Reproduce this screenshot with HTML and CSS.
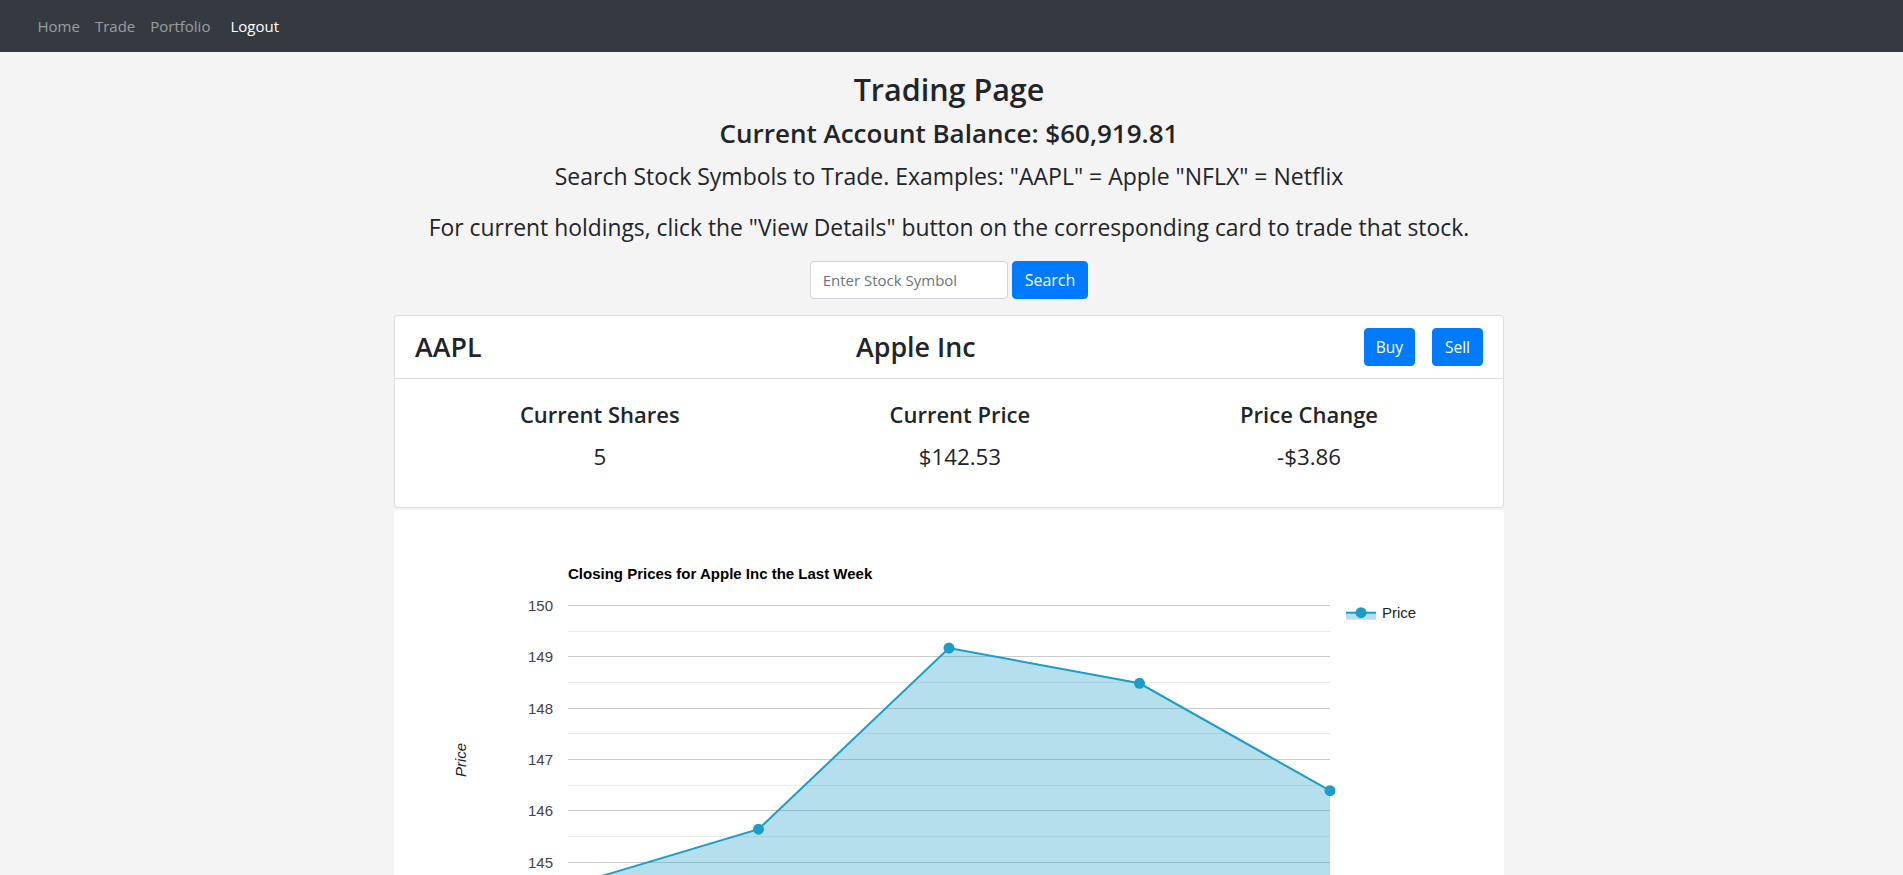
FILE: index.html
```html
<!DOCTYPE html>
<html lang="en">
<head>
<meta charset="utf-8">
<title>Trading Page</title>
<link rel="stylesheet" href="styles.css">
</head>
<body>
<nav class="navbar">
  <a class="nav-link" href="#">Home</a>
  <a class="nav-link" href="#">Trade</a>
  <a class="nav-link" href="#">Portfolio</a>
  <a class="nav-link logout" href="#">Logout</a>
</nav>
<div class="page">
<main class="container">
  <h2 class="title">Trading Page</h2>
  <h3 class="balance">Current Account Balance: $60,919.81</h3>
  <p class="lead">Search Stock Symbols to Trade. Examples: "AAPL" = Apple "NFLX" = Netflix</p>
  <p class="lead">For current holdings, click the "View Details" button on the corresponding card to trade that stock.</p>
  <form class="search" onsubmit="return false">
    <input class="form-control" type="text" placeholder="Enter Stock Symbol">
    <button class="btn" type="submit">Search</button>
  </form>
  <section class="card">
    <div class="card-header">
      <h3 class="symbol">AAPL</h3>
      <h3 class="company">Apple Inc</h3>
      <div class="actions">
        <button class="btn" type="button">Buy</button>
        <button class="btn" type="button">Sell</button>
      </div>
    </div>
    <div class="card-body">
      <div class="stat"><h4>Current Shares</h4><p>5</p></div>
      <div class="stat"><h4>Current Price</h4><p>$142.53</p></div>
      <div class="stat"><h4>Price Change</h4><p>-$3.86</p></div>
    </div>
  </section>
  <div class="chart">
    <svg class="chart-svg" width="1110" height="480" viewBox="0 0 1110 480" xmlns="http://www.w3.org/2000/svg">
      <text class="c-title" x="174" y="69">Closing Prices for Apple Inc the Last Week</text>
      <g class="minor">
        <line x1="174" x2="936" y1="121.5" y2="121.5"/>
        <line x1="174" x2="936" y1="172.5" y2="172.5"/>
        <line x1="174" x2="936" y1="223.5" y2="223.5"/>
        <line x1="174" x2="936" y1="275.5" y2="275.5"/>
        <line x1="174" x2="936" y1="326.5" y2="326.5"/>
        <line x1="174" x2="936" y1="377.5" y2="377.5"/>
      </g>
      <g class="major">
        <line x1="174" x2="936" y1="95.5" y2="95.5"/>
        <line x1="174" x2="936" y1="146.5" y2="146.5"/>
        <line x1="174" x2="936" y1="198.5" y2="198.5"/>
        <line x1="174" x2="936" y1="249.5" y2="249.5"/>
        <line x1="174" x2="936" y1="300.5" y2="300.5"/>
        <line x1="174" x2="936" y1="352.5" y2="352.5"/>
        <line x1="174" x2="936" y1="403.5" y2="403.5"/>
      </g>
      <g class="ylabels">
        <text x="159" y="101">150</text>
        <text x="159" y="152">149</text>
        <text x="159" y="204">148</text>
        <text x="159" y="255">147</text>
        <text x="159" y="306">146</text>
        <text x="159" y="358">145</text>
        <text x="159" y="409">144</text>
      </g>
      <text class="axis-title" transform="translate(72,250) rotate(-90)">Price</text>
      <polygon class="area" points="174,403.5 174,376.1 364.5,319.2 555,138.1 745.5,173.3 936,280.7 936,403.5"/>
      <polyline class="series" points="174,376.1 364.5,319.2 555,138.1 745.5,173.3 936,280.7"/>
      <g class="dots">
        <circle cx="174" cy="376.1" r="5.5"/>
        <circle cx="364.5" cy="319.2" r="5.5"/>
        <circle cx="555" cy="138.1" r="5.5"/>
        <circle cx="745.5" cy="173.3" r="5.5"/>
        <circle cx="936" cy="280.7" r="5.5"/>
      </g>
      <g class="legend">
        <rect class="area" x="952" y="102.7" width="30" height="7"/>
        <line class="series" x1="952" x2="982" y1="102.7" y2="102.7"/>
        <circle class="dot" cx="967" cy="102.7" r="5.5"/>
        <text class="legend-text" x="988" y="108">Price</text>
      </g>
    </svg>
  </div>
</main>
</div>
</body>
</html>
```

FILE: styles.css
```css
* { box-sizing: border-box; }
html, body { margin: 0; padding: 0; }
body {
  font-family: "Open Sans", "Noto Sans", sans-serif;
  background: #f4f4f4;
  color: #212529;
}
.navbar {
  background: #343a40;
  height: 52px;
  display: flex;
  align-items: center;
  padding: 0 30px;
}
.nav-link {
  color: rgba(255,255,255,.5);
  text-decoration: none;
  font-size: 15px;
  line-height: 24px;
  padding: 0 7.5px;
}
.nav-link.logout { color: #fff; margin-left: 5px; }

.page { padding-right: 5px; }
.container {
  width: 1110px;
  margin: 0 auto;
  text-align: center;
}
.title {
  font-size: 30.5px;
  font-weight: 600;
  line-height: 38px;
  margin: 18px 0 8px;
}
.balance {
  font-size: 26px;
  font-weight: 600;
  line-height: 34px;
  margin: 0 0 8px;
}
.lead {
  font-size: 23px;
  font-weight: 400;
  line-height: 36px;
  margin: 0 0 16px;
}
.lead + .lead { font-size: 22.85px; margin-bottom: 15px; }
.search {
  display: flex;
  justify-content: center;
  gap: 4px;
  margin: 0 0 16px;
}
.form-control {
  width: 198px;
  height: 38px;
  border: 1px solid #ced4da;
  border-radius: 4px;
  padding: 6px 12px;
  font-family: inherit;
  font-size: 15px;
  color: #495057;
  background: #fff;
}
.form-control::placeholder { color: #6c757d; }
.btn {
  background: #007bff;
  color: #fff;
  border: 1px solid #007bff;
  border-radius: 4px;
  padding: 6px 12px;
  font-family: inherit;
  font-size: 15.5px;
  line-height: 24px;
  height: 38px;
}
.search .btn { font-size: 16px; }
.card {
  background: #fff;
  border: 1px solid rgba(0,0,0,.125);
  border-radius: 4px;
  text-align: left;
}
.card-header {
  display: flex;
  align-items: center;
  padding: 12px 20px;
  border-bottom: 1px solid rgba(0,0,0,.125);
}
.card-header h3 {
  font-size: 26.8px;
  font-weight: 600;
  line-height: 34px;
  margin: 0;
}
.symbol { width: 441px; }
.actions { margin-left: auto; display: flex; gap: 17px; }
.actions .btn:first-child { padding: 6px 11px; }
.card-body {
  display: flex;
  justify-content: space-around;
  padding: 21px 20px 19px;
  text-align: center;
}
.stat h4 {
  font-size: 22px;
  font-weight: 600;
  line-height: 29px;
  margin: 0 0 10px;
}
.stat p {
  font-size: 22.3px;
  line-height: 36px;
  margin: 0 0 13px;
}
.chart {
  background: #fff;
  margin-top: 2px;
  height: 520px;
}
.chart-svg { display: block; font-family: Arial, "Liberation Sans", sans-serif; }
.c-title { font-size: 15px; font-weight: bold; fill: #000; }
.minor line { stroke: #ebebeb; stroke-width: 1; }
.major line { stroke: #cccccc; stroke-width: 1; }
.ylabels text { font-size: 15px; fill: #444; text-anchor: end; }
.axis-title { font-size: 15px; font-style: italic; fill: #222; text-anchor: middle; }
.area { fill: #1c9dc6; fill-opacity: .32; }
.series { fill: none; stroke: #1c9dc6; stroke-width: 2; }
.dots circle, .dot { fill: #1c9dc6; }
.legend-text { font-size: 15px; fill: #222; }
```
